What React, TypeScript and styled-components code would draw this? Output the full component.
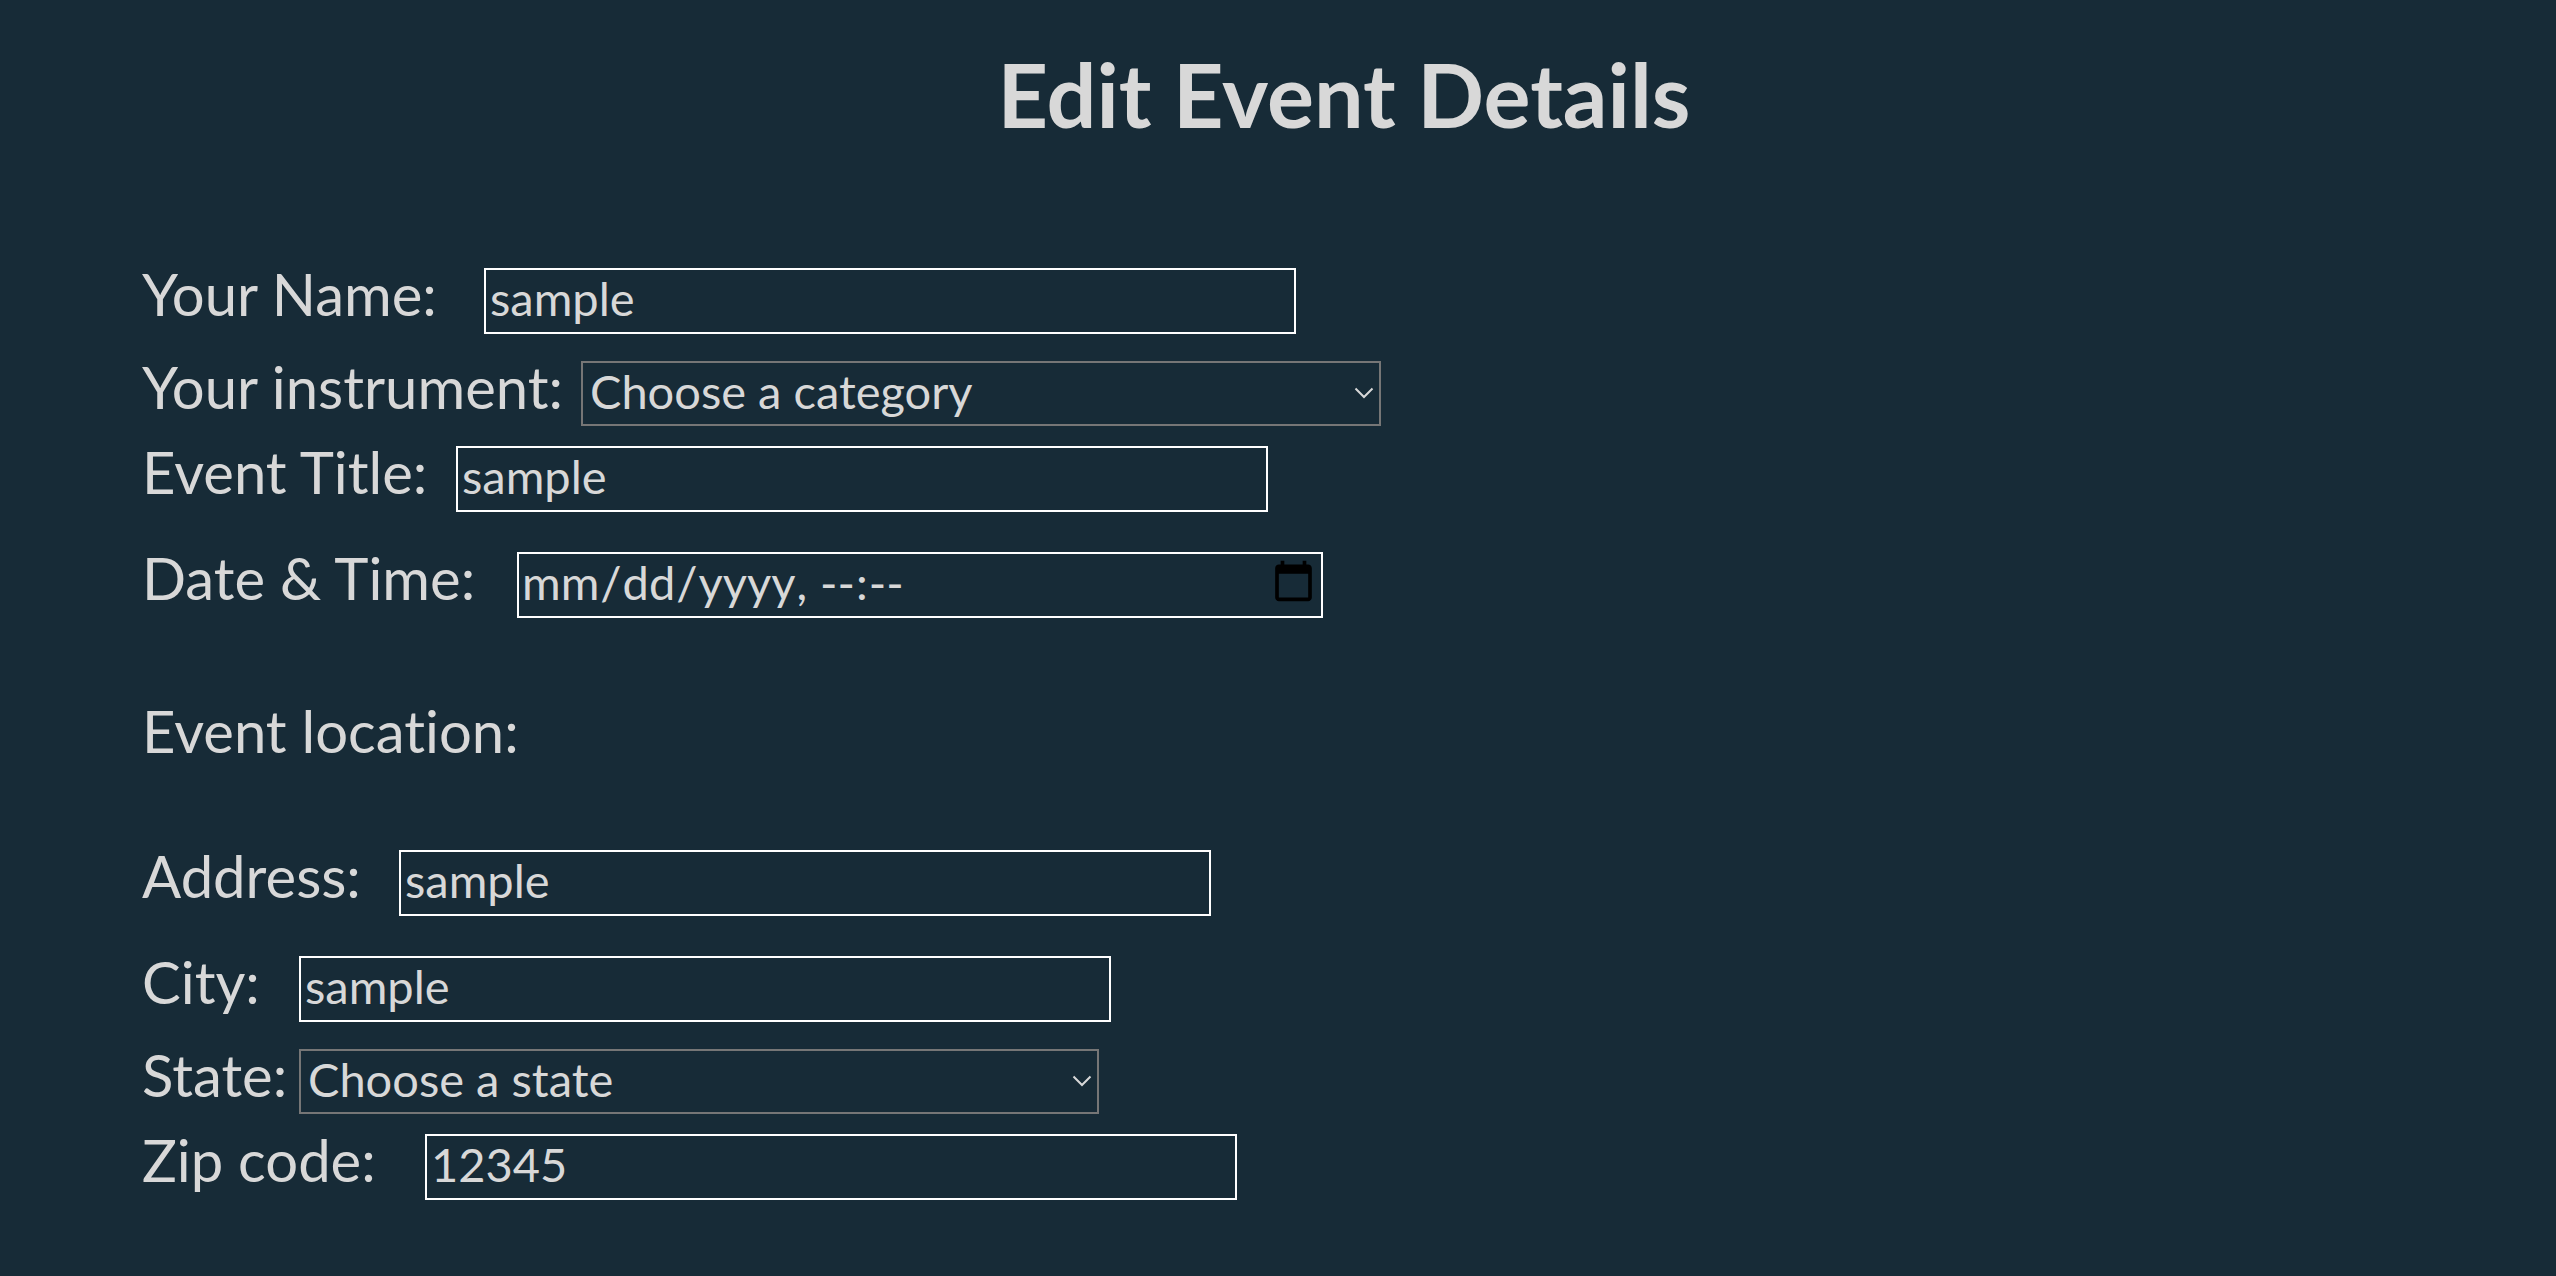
import React from "react";
import styled, { createGlobalStyle, css } from "styled-components";

const GlobalStyle = createGlobalStyle`
  *, *::before, *::after { box-sizing: border-box; }
  html { background: #172b37; color-scheme: light; }
  body {
    margin: 0;
    background: #172b37;
    color: #d8d8d8;
    font-family: Optima, Lato, "Liberation Sans", sans-serif;
    font-variant-ligatures: none;
  }
`;

const Page = styled.main`
  padding: 41px 10px 56px 142px;
`;

const Title = styled.h1`
  margin: 0 0 101px;
  font-size: 88px;
  line-height: 106px;
  font-weight: 700;
  text-align: center;
`;

const Row = styled.div<{ $compact?: boolean }>`
  display: flex;
  align-items: baseline;
  padding: ${(p) => (p.$compact ? "7px 0 0" : "20px 0")};
`;

const Label = styled.label<{ $width: number }>`
  flex: 0 0 ${(p) => p.$width}px;
  font-size: 58px;
  line-height: 50px;
  white-space: nowrap;
`;

const GroupHeading = styled.p`
  margin: 58px 0 64px;
  font-size: 58px;
  line-height: 70px;
`;

const control = css`
  margin: 0;
  border-radius: 0;
  background: transparent;
  color: inherit;
  font-family: inherit;
  font-size: 47px;
  outline: none;
`;

const TextInput = styled.input`
  ${control}
  width: 812px;
  height: 66px;
  padding: 0 4px 6px;
  border: 2px solid #ffffff;
`;

const DateInput = styled(TextInput)`
  width: 806px;
  padding: 0 2px 6px;

  &::-webkit-datetime-edit-ampm-field {
    display: none;
  }
`;

const SelectBox = styled.div`
  position: relative;
  width: 800px;
`;

const Select = styled.select`
  ${control}
  display: block;
  width: 100%;
  height: 65px;
  padding: 0 40px 6px 7px;
  border: 2px solid #767676;
  appearance: none;
`;

const Chevron = styled.svg`
  position: absolute;
  right: 7px;
  top: 26px;
  width: 20px;
  height: 12px;
  fill: none;
  stroke: currentColor;
  stroke-width: 2;
  pointer-events: none;
`;

type FieldProps = { id: string; label: string; labelWidth: number };

function TextField({ id, label, labelWidth, value }: FieldProps & { value: string }) {
  return (
    <Row>
      <Label htmlFor={id} $width={labelWidth}>{label}</Label>
      <TextInput id={id} name={id} type="text" defaultValue={value} />
    </Row>
  );
}

function SelectField({ id, label, labelWidth, placeholder }: FieldProps & { placeholder: string }) {
  return (
    <Row $compact>
      <Label htmlFor={id} $width={labelWidth}>{label}</Label>
      <SelectBox>
        <Select id={id} name={id} defaultValue="">
          <option value="">{placeholder}</option>
        </Select>
        <Chevron viewBox="0 0 20 12" aria-hidden="true">
          <path d="M1.500 1.500 L10 10 L18.500 1.500" />
        </Chevron>
      </SelectBox>
    </Row>
  );
}

export default function App() {
  return (
    <>
      <GlobalStyle />
      <Page>
        <Title>Edit Event Details</Title>
        <form>
          <TextField id="name" label="Your Name:" labelWidth={342} value="sample" />
          <SelectField id="instrument" label="Your instrument:" labelWidth={439} placeholder="Choose a category" />
          <TextField id="title" label="Event Title:" labelWidth={314} value="sample" />
          <Row>
            <Label htmlFor="date" $width={375}>Date &amp; Time:</Label>
            <DateInput id="date" name="date" type="datetime-local" />
          </Row>
          <GroupHeading>Event location:</GroupHeading>
          <TextField id="address" label="Address:" labelWidth={257} value="sample" />
          <TextField id="city" label="City:" labelWidth={157} value="sample" />
          <SelectField id="state" label="State:" labelWidth={157} placeholder="Choose a state" />
          <TextField id="zip" label="Zip code:" labelWidth={283} value="12345" />
        </form>
      </Page>
    </>
  );
}
